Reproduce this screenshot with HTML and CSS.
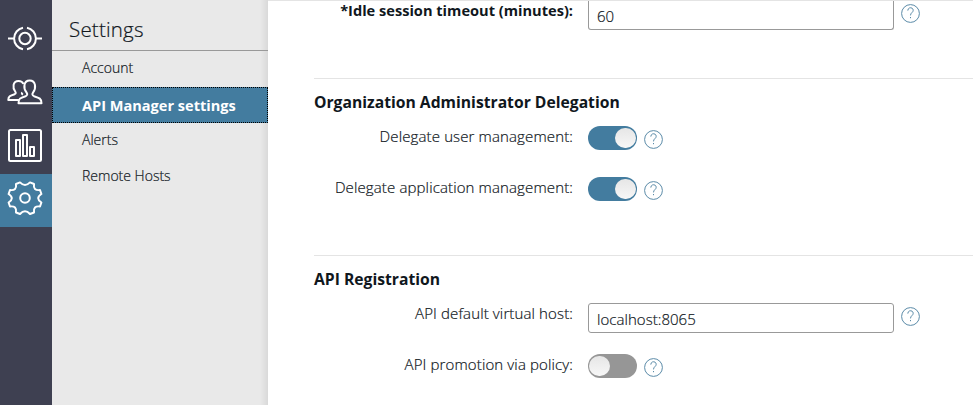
FILE: index.html
```html
<!DOCTYPE html>
<html lang="en">
<head>
<meta charset="utf-8">
<title>Settings</title>
<link rel="stylesheet" href="styles.css">
</head>
<body>
<div class="app">
  <nav class="rail">
    <a class="rail-item">
      <svg width="36" height="36" viewBox="0 0 36 36"><circle cx="18" cy="17.500" r="5.7"/><path d="M16 6.700A11 11 0 0 0 16 28.300M20 6.700A11 11 0 0 1 20 28.300M1 17.500h6M29 17.500h6"/></svg>
    </a>
    <a class="rail-item">
      <svg class="people" width="36" height="36" viewBox="0 0 36 36"><path d="M12 25H1.300C1.300 21.500 3 20.600 7.600 19.200C9 18.500 9 17.600 8.200 16.500C5.500 13 5.500 6 11.500 6C14 6 15.600 7 16.400 9M15.300 17.500C14.500 18.400 14.800 19 16 19.600"/><path d="M11.500 28.300C11.500 23.600 13 22.900 18.500 21.200C20.500 20.400 20.600 19 19.600 17.600C16 13 16.500 5.500 22.700 5.500S29.400 13 26 17.600C25 19 25.200 20.400 27 21.200C32.500 22.900 34.500 23.600 34.500 28.300Z"/></svg>
    </a>
    <a class="rail-item">
      <svg width="36" height="36" viewBox="0 0 36 36"><rect x="2" y="1" width="32" height="31" rx="1.500"/><path d="M9 11h4v16H9zM16 6h4v21h-4zM23 18h4v9h-4z"/></svg>
    </a>
    <a class="rail-item active">
      <svg width="36" height="36" viewBox="0 0 36 36"><circle cx="18" cy="18" r="4.800"/><path d="M13 2.400Q18 7.500 23 2.400L27 4Q26 11 33 10L34.400 14Q28 18 34.400 22.500L33 26.500Q26 25.500 27 32.500L23 34Q18 28.500 13 34L9 32.500Q10 25.500 3 26.500L1.600 22.500Q8 18 1.600 14L3 10Q10 11 9 4Z"/></svg>
    </a>
  </nav>
  <aside class="sidebar">
    <h1>Settings</h1>
    <ul>
      <li>Account</li>
      <li class="selected">API Manager settings</li>
      <li>Alerts</li>
      <li>Remote Hosts</li>
    </ul>
  </aside>
  <main>
    <section class="first">
      <div class="row">
        <label class="required">*Idle session timeout (minutes):</label>
        <div class="field">60</div>
        <svg class="help" viewBox="0 0 19 19"><circle cx="9.500" cy="9.500" r="8.900"/><path d="M6.800 6.600C6.800 2.800 12.200 2.900 12.200 6.300C12.200 8.600 9.500 8.700 9.500 11.400M9.500 13v1.200"/></svg>
      </div>
    </section>
    <section>
      <h2>Organization Administrator Delegation</h2>
      <div class="row">
        <label>Delegate user management:</label>
        <div class="toggle on"></div>
        <svg class="help" viewBox="0 0 19 19"><circle cx="9.500" cy="9.500" r="8.900"/><path d="M6.800 6.600C6.800 2.800 12.200 2.900 12.200 6.300C12.200 8.600 9.500 8.700 9.500 11.400M9.500 13v1.200"/></svg>
      </div>
      <div class="row">
        <label>Delegate application management:</label>
        <div class="toggle on"></div>
        <svg class="help" viewBox="0 0 19 19"><circle cx="9.500" cy="9.500" r="8.900"/><path d="M6.800 6.600C6.800 2.800 12.200 2.900 12.200 6.300C12.200 8.600 9.500 8.700 9.500 11.400M9.500 13v1.200"/></svg>
      </div>
    </section>
    <section class="last">
      <h2>API Registration</h2>
      <div class="row">
        <label>API default virtual host:</label>
        <div class="field">localhost:8065</div>
        <svg class="help" viewBox="0 0 19 19"><circle cx="9.500" cy="9.500" r="8.900"/><path d="M6.800 6.600C6.800 2.800 12.200 2.900 12.200 6.300C12.200 8.600 9.500 8.700 9.500 11.400M9.500 13v1.200"/></svg>
      </div>
      <div class="row">
        <label>API promotion via policy:</label>
        <div class="toggle"></div>
        <svg class="help" viewBox="0 0 19 19"><circle cx="9.500" cy="9.500" r="8.900"/><path d="M6.800 6.600C6.800 2.800 12.200 2.900 12.200 6.300C12.200 8.600 9.500 8.700 9.500 11.400M9.500 13v1.200"/></svg>
      </div>
    </section>
  </main>
</div>
</body>
</html>
```
FILE: styles.css
```css
* { box-sizing: border-box; }
body {
  margin: 0;
  font-family: "Open Sans", sans-serif;
  font-size: 15px;
  font-weight: 300;
  color: #10171d;
  -webkit-text-stroke: 0.2px;
}
.app { display: flex; height: 405px; background: #fff; }
.rail { width: 52px; flex: none; padding-top: 12px; background: #3e4051; }
.rail-item {
  display: flex;
  align-items: center;
  justify-content: center;
  height: 54px;
  padding-right: 2px;
}
.rail-item.active { height: 53px; padding-bottom: 5px; background: #437c9f; }
.rail svg { fill: none; stroke: #fff; stroke-width: 2; stroke-linejoin: round; }
.sidebar {
  width: 216px;
  flex: none;
  background: linear-gradient(to left, #d9d9d9, #e9e9e9 8px);
}
.sidebar h1 {
  height: 51px;
  margin: 0;
  padding: 14px 0 0 17px;
  border-bottom: 1px solid #999;
  font-size: 20.500px;
  font-weight: 300;
  letter-spacing: 0.2px;
  line-height: 30px;
}
.sidebar ul { margin: 0; padding: 0; list-style: none; }
.sidebar li { height: 36px; padding-left: 30px; font-size: 14px; line-height: 34px; }
.sidebar li.selected {
  padding-left: 29px;
  border: 1px dotted #000;
  background: #437c9f;
  color: #fff;
  font-size: 14.550px;
  font-weight: 700;
  -webkit-text-stroke: 0;
}
main {
  flex: 1;
  min-width: 0;
  padding-left: 46px;
  border-top: 1px solid #e4e4e4;
}
section { height: 177px; padding-top: 11px; border-top: 1px solid #e4e4e4; }
section.first { height: 77px; padding: 0; border: 0; }
section.last { height: auto; }
h2 { height: 24px; margin: 0 0 12px; font-size: 15.700px; line-height: 24px; font-weight: 700; -webkit-text-stroke: 0; }
.row { display: flex; align-items: flex-start; height: 51px; }
label { width: 259px; margin-right: 15px; text-align: right; line-height: 20px; white-space: nowrap; letter-spacing: 0.13px; }
.required { margin-top: -1px; font-size: 14.600px; font-weight: 700; letter-spacing: 0; -webkit-text-stroke: 0; }
.field {
  width: 306px;
  height: 30px;
  padding-left: 8px;
  border: 1px solid #999;
  border-radius: 3px;
  line-height: 31px;
  letter-spacing: 0.05px;
}
.first .field { height: 29px; border-top: 0; border-radius: 0 0 3px 3px; }
.help { width: 19px; height: 19px; margin: 4px 0 0 7px; fill: none; stroke: #5b8ba8; stroke-width: 1; }
.first .help { margin-top: 3px; }
.toggle {
  display: flex;
  width: 49px;
  height: 24px;
  padding: 2px 1px;
  border-radius: 12px;
  background: #969696;
}
.toggle::before {
  content: "";
  width: 21px;
  height: 20px;
  border-radius: 10px;
  background: linear-gradient(#e6e6e6, #f7f7f7);
}
.toggle.on { justify-content: flex-end; background: #437c9f; }
.last .row:last-child { height: 24px; }
```
